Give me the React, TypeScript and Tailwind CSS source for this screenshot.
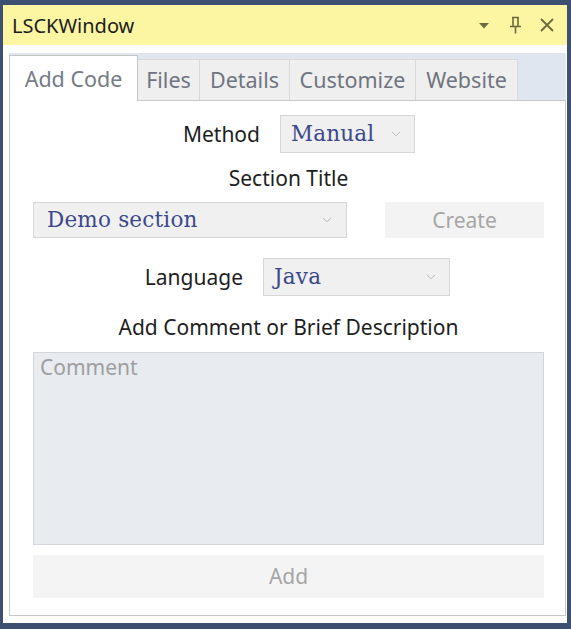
import React from "react";

function Chevron() {
  return (
    <svg width="10" height="6" viewBox="0 0 10 6" className="shrink-0">
      <path d="M1 0.8 L5 4.8 L9 0.8" fill="none" stroke="#b9b9b9" strokeWidth="1" />
    </svg>
  );
}

function Combo({ boxClass, text, chevronClass }: { boxClass: string; text: string; chevronClass: string }) {
  return (
    <div className={"bg-[#f0f0f0] border border-[#d6d6d6] flex items-center shrink-0 " + boxClass}>
      <span className="font-['DejaVu_Serif',serif] text-[21.5px] leading-none text-[#3b498b] tracking-[0.2px]">{text}</span>
      <span className={"ml-auto flex items-center " + chevronClass}>
        <Chevron />
      </span>
    </div>
  );
}

export default function App() {
  return (
    <div className="w-[571px] h-[629px] bg-white border-solid border-[#3d5071] border-l-[3px] border-r-[4px] border-t-[5px] border-b-[6px] flex flex-col font-['Noto_Sans',sans-serif] overflow-hidden">
      {/* Title bar */}
      <div className="h-[40px] shrink-0 bg-[#fcf5a2] flex items-center pl-[9px] pr-[13px]">
        <span className="text-[20px] leading-none text-[#1c1c1c] mt-[2px]">LSCKWindow</span>
        <div className="ml-auto flex items-center">
          <svg width="10" height="6" viewBox="0 0 10 6" className="mr-[20px] mt-[1px]">
            <path d="M0 0 H10 L5 5.5 Z" fill="#6d6a3f" />
          </svg>
          <svg width="13" height="18" viewBox="0 0 13 18" className="mr-[18px]">
            <path
              d="M3 1.5 H10 M4 1.5 V10 M9 1.5 V10 M1 10.5 H12 M6.5 10.5 V17.5"
              fill="none"
              stroke="#6d6a3f"
              strokeWidth="1.6"
            />
          </svg>
          <svg width="14" height="14" viewBox="0 0 14 14">
            <path d="M1 1 L13 13 M13 1 L1 13" fill="none" stroke="#6d6a3f" strokeWidth="1.8" />
          </svg>
        </div>
      </div>

      <div className="h-[8px] shrink-0" />

      {/* Tabs + panel */}
      <div className="ml-[6px] mr-[1px] flex flex-col">
        <div className="h-[47px] bg-[#dfe6ef] flex items-end shrink-0">
          <div className="relative z-10 -mb-px h-[46px] w-[129px] bg-white border-l border-t border-r border-[#c6c6c6] flex items-center justify-center">
            <span className="text-[21.5px] leading-none text-[#767b85]">Add Code</span>
          </div>
          <div className="h-[41px] w-[62px] bg-[#efefef] border-t border-r border-[#d9d9d9] flex items-center justify-center">
            <span className="text-[21.5px] leading-none text-[#6f7480]">Files</span>
          </div>
          <div className="h-[41px] w-[90px] bg-[#efefef] border-t border-r border-[#d9d9d9] flex items-center justify-center">
            <span className="text-[21.5px] leading-none text-[#6f7480]">Details</span>
          </div>
          <div className="h-[41px] w-[126px] bg-[#efefef] border-t border-r border-[#d9d9d9] flex items-center justify-center">
            <span className="text-[21.5px] leading-none text-[#6f7480]">Customize</span>
          </div>
          <div className="h-[41px] w-[102px] bg-[#efefef] border-t border-r border-[#d9d9d9] flex items-center justify-center">
            <span className="text-[21.5px] leading-none text-[#6f7480]">Website</span>
          </div>
        </div>

        <div className="h-[516px] border border-[#c9c9c9] bg-white flex flex-col text-[21px] leading-[27px] text-[#1e1e1e]">
          {/* Method row */}
          <div className="mt-[14px] flex items-center">
            <div className="w-[250px] text-right">Method</div>
            <div className="w-[20px]" />
            <Combo boxClass="w-[135px] h-[38px] pl-[10px]" text="Manual" chevronClass="pr-[13px]" />
          </div>

          {/* Section title */}
          <div className="mt-[12px] text-center pl-[2px]">Section Title</div>

          {/* Demo section row */}
          <div className="mt-[10px] flex items-center pl-[23px] pr-[21px]">
            <Combo boxClass="w-[314px] h-[36px] pl-[13px]" text="Demo section" chevronClass="pr-[14px]" />
            <div className="ml-auto w-[159px] h-[36px] bg-[#f3f3f3] flex items-center justify-center text-[#a6a6a6]">
              Create
            </div>
          </div>

          {/* Language row */}
          <div className="mt-[20px] flex items-center">
            <div className="w-[233px] text-right">Language</div>
            <div className="w-[20px]" />
            <Combo boxClass="w-[187px] h-[38px] pl-[10px]" text="Java" chevronClass="pr-[13px]" />
          </div>

          {/* Add comment label */}
          <div className="mt-[18px] text-center pl-[2px]">Add Comment or Brief Description</div>

          {/* Comment box */}
          <div className="mt-[11px] ml-[23px] mr-[21px] h-[193px] bg-[#e8ebef] border border-[#d3d6db] px-[6px] pt-[1px] text-[#9d9fa3]">
            Comment
          </div>

          {/* Add button */}
          <div className="mt-[10px] ml-[23px] mr-[21px] h-[43px] bg-[#f4f4f4] flex items-center justify-center text-[#a6a6a6]">
            Add
          </div>
        </div>
      </div>
    </div>
  );
}
